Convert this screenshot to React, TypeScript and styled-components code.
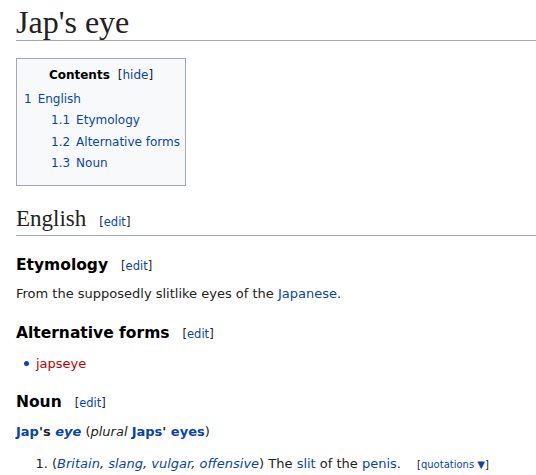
import React from 'react';
import styled, { createGlobalStyle } from 'styled-components';

const GlobalStyle = createGlobalStyle`
  html, body {
    margin: 0;
    padding: 0;
    background: #fff;
  }
  body {
    font-family: "DejaVu Sans", "Noto Sans", sans-serif;
    font-size: 13px;
    color: #222;
  }
`;

const Page = styled.div`
  padding: 5px 0 0 16px;
`;

const Title = styled.h1`
  margin: 0 0 17px;
  padding: 0;
  font-family: "Liberation Serif", "DejaVu Serif", serif;
  font-weight: normal;
  font-size: 32px;
  line-height: 35px;
  border-bottom: 1px solid #a2a9b1;
`;

const Toc = styled.div`
  display: inline-block;
  box-sizing: border-box;
  width: 170px;
  padding: 9px 7px 11px 7px;
  border: 1px solid #a2a9b1;
  background: #f8f9fa;
  white-space: nowrap;
`;

const TocTitle = styled.div`
  text-align: center;
  font-size: 12px;
  margin-bottom: 7px;

  b {
    font-weight: bold;
    color: #000;
  }
`;

const Toggle = styled.span`
  margin-left: 8px;
  color: #222;
  a {
    color: #0645ad;
  }
`;

const TocList = styled.ul`
  list-style: none;
  margin: 0;
  padding: 0;
`;

const TocItem = styled.li<{ level: number }>`
  padding-left: ${({ level }) => (level - 1) * 27}px;
  line-height: 21.3px;
  color: #0645ad;
  font-size: 12px;
  span {
    margin-right: 6px;
  }
`;

const H2 = styled.h2`
  margin: 20px 0 0;
  padding-bottom: 3px;
  font-family: "Liberation Serif", "DejaVu Serif", serif;
  font-weight: normal;
  font-size: 23px;
  border-bottom: 1px solid #a2a9b1;
  display: flex;
  align-items: baseline;
`;

const H3 = styled.h3<{ top: number }>`
  margin: ${({ top }) => top}px 0 0;
  font-size: 15.5px;
  font-weight: bold;
  color: #000;
  display: flex;
  align-items: baseline;
`;

const Edit = styled.span`
  font-family: "DejaVu Sans", sans-serif;
  font-weight: normal;
  font-size: 11.5px;
  margin-left: 13px;
  color: #222;
  a {
    color: #0645ad;
  }
`;

const Para = styled.p`
  margin: 10px 0 0;
  line-height: 1.5;
`;

const Link = styled.a<{ red?: boolean }>`
  color: ${({ red }) => (red ? '#ba0000' : '#0645ad')};
  text-decoration: none;
`;

const Bullets = styled.ul`
  margin: 12px 0 0;
  padding-left: 8px;
  list-style: none;
  li {
    display: flex;
    align-items: center;
    line-height: 1.5;
  }
  li::before {
    content: '';
    width: 5px;
    height: 5px;
    border-radius: 50%;
    background: #0645ad;
    margin-right: 7px;
  }
`;

const Headword = styled.p`
  margin: 11px 0 0;
  line-height: 1.5;
  b a {
    color: #0645ad;
  }
`;

const Defs = styled.ol`
  margin: 12px 0 0;
  padding-left: 36px;
  line-height: 1.5;
`;

const Quotes = styled.span`
  font-size: 10px;
  margin-left: 16px;
  a {
    color: #0645ad;
  }
`;

const App: React.FC = () => (
  <Page>
    <GlobalStyle />
    <Title>Jap's eye</Title>
    <Toc>
      <TocTitle>
        <b>Contents</b>
        <Toggle>
          [<a>hide</a>]
        </Toggle>
      </TocTitle>
      <TocList>
        <TocItem level={1}><span>1</span>English</TocItem>
        <TocItem level={2}><span>1.1</span>Etymology</TocItem>
        <TocItem level={2}><span>1.2</span>Alternative forms</TocItem>
        <TocItem level={2}><span>1.3</span>Noun</TocItem>
      </TocList>
    </Toc>
    <H2>
      English
      <Edit>[<a>edit</a>]</Edit>
    </H2>
    <H3 top={20}>
      Etymology
      <Edit>[<a>edit</a>]</Edit>
    </H3>
    <Para>
      From the supposedly slitlike eyes of the <Link>Japanese</Link>.
    </Para>
    <H3 top={20}>
      Alternative forms
      <Edit>[<a>edit</a>]</Edit>
    </H3>
    <Bullets>
      <li><Link red>japseye</Link></li>
    </Bullets>
    <H3 top={20}>
      Noun
      <Edit>[<a>edit</a>]</Edit>
    </H3>
    <Headword>
      <b><Link>Jap</Link>'s <Link><i>eye</i></Link></b> (<i>plural</i> <b><Link>Japs</Link>' <Link>eyes</Link></b>)
    </Headword>
    <Defs>
      <li>
        (<i><Link>Britain</Link>, <Link>slang</Link>, <Link>vulgar</Link>, <Link>offensive</Link></i>) The{' '}
        <Link>slit</Link> of the <Link>penis</Link>.
        <Quotes>[<a>quotations ▼</a>]</Quotes>
      </li>
    </Defs>
  </Page>
);

export default App;
